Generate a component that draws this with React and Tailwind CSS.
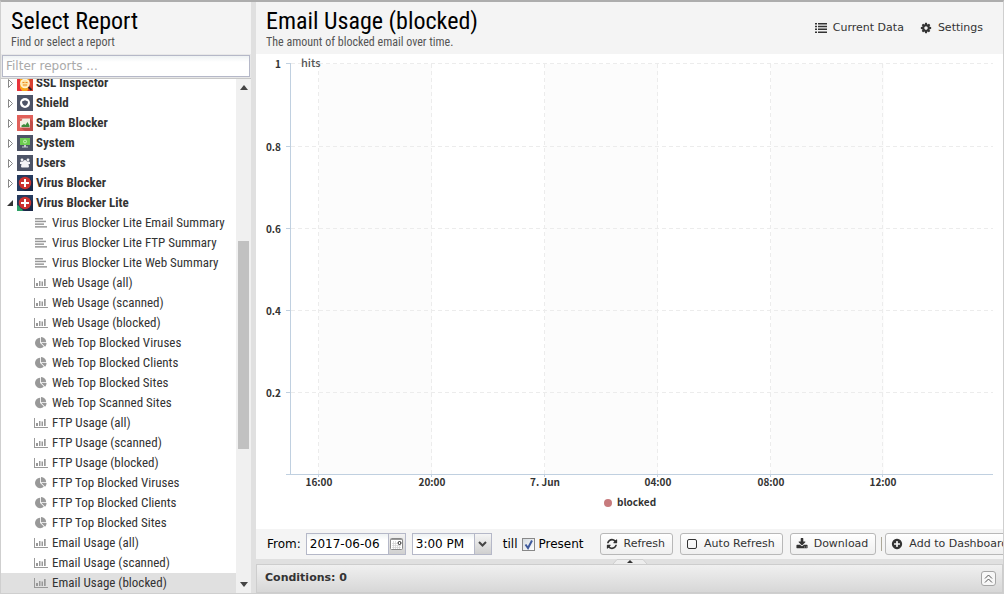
import React from "react";

const CONDENSED = "font-['Roboto_Condensed','Roboto',sans-serif]";

const PATHS = {
  cog: "M1152 896q0-106-75-181t-181-75-181 75-75 181 75 181 181 75 181-75 75-181zm512-109v222q0 12-8 23t-20 13l-185 28q-19 54-39 91 35 50 107 138 10 12 10 25t-9 23q-27 37-99 108t-94 71q-12 0-26-9l-138-108q-44 23-91 38-16 136-29 186-7 28-36 28h-222q-14 0-24.5-8.5t-11.5-21.5l-28-184q-49-16-90-37l-141 107q-10 9-25 9-14 0-25-11-126-114-165-168-7-10-7-23 0-12 8-23 15-21 51-66.5t54-70.5q-27-50-41-99l-183-27q-13-2-21-12.5t-8-23.5v-222q0-12 8-23t19-13l186-28q14-46 39-92-40-57-107-138-10-12-10-24 0-10 9-23 26-36 98.5-107.5t94.5-71.5q13 0 26 10l138 107q44-23 91-38 16-136 29-186 7-28 36-28h222q14 0 24.5 8.5t11.5 21.5l28 184q49 16 90 37l142-107q9-9 24-9 13 0 25 10 129 119 165 170 7 8 7 22 0 12-8 23-15 21-51 66.5t-54 70.5q26 50 41 98l183 28q13 2 21 12.5t8 23.5z",
  refresh: "M1639 1056q0 5-1 7-64 268-268 434.5t-478 166.5q-146 0-282.5-55t-243.5-157l-129 129q-19 19-45 19t-45-19-19-45v-448q0-26 19-45t45-19h448q26 0 45 19t19 45-19 45l-137 137q71 66 161 102t187 36q134 0 250-65t186-179q11-17 53-117 8-23 30-23h192q13 0 22.5 9.5t9.5 22.5zm25-800v448q0 26-19 45t-45 19h-448q-26 0-45-19t-19-45 19-45l138-138q-148-137-349-137-134 0-250 65t-186 179q-11 17-53 117-8 23-30 23h-199q-13 0-22.5-9.5t-9.5-22.5v-7q65-268 270-434.5t480-166.5q146 0 284 55.5t245 156.5l130-129q19-19 45-19t45 19 19 45z",
  download: "M1344 1344q0-26-19-45t-45-19-45 19-19 45 19 45 45 19 45-19 19-45zm256 0q0-26-19-45t-45-19-45 19-19 45 19 45 45 19 45-19 19-45zm128-224v320q0 40-28 68t-68 28h-1472q-40 0-68-28t-28-68v-320q0-40 28-68t68-28h465l135 136q58 56 136 56t136-56l136-136h464q40 0 68 28t28 68zm-325-569q17 41-14 70l-448 448q-18 19-45 19t-45-19l-448-448q-31-29-14-70 17-39 59-39h256v-448q0-26 19-45t45-19h256q26 0 45 19t19 45v448h256q42 0 59 39z",
  plus: "M1344 960v-128q0-26-19-45t-45-19h-256v-256q0-26-19-45t-45-19h-128q-26 0-45 19t-19 45v256h-256q-26 0-45 19t-19 45v128q0 26 19 45t45 19h256v256q0 26 19 45t45 19h128q26 0 45-19t19-45v-256h256q26 0 45-19t19-45zm320-64q0 209-103 385.5t-279.5 279.5-385.5 103-385.5-103-279.5-279.5-103-385.5 103-385.5 279.5-279.5 385.5-103 385.5 103 279.5 279.5 103 385.5z",
  pie: "M768 890l546 546q-106 108-247.5 168t-298.5 60q-209 0-385.5-103t-279.5-279.5-103-385.5 103-385.5 279.5-279.5 385.5-103v762zm187 6h773q0 157-60 298.5t-168 247.5zm709-128h-768v-768q209 0 385.5 103t279.5 279.5 103 385.5z",
};

function Glyph({ name, className }) {
  return (
    <svg viewBox="0 0 1792 1792" className={className} fill="currentColor" aria-hidden="true">
      <path d={PATHS[name]} />
    </svg>
  );
}

function ReportIcon({ type }) {
  if (type === "pie") return <Glyph name="pie" className="h-3 w-[14px] shrink-0 text-[#999]" />;
  return (
    <svg viewBox="0 0 14 12" className="h-3 w-[14px] shrink-0" fill="#999" aria-hidden="true">
      {type === "text" ? (
        <>
          <rect x="1" y="1" width="8" height="1.500" />
          <rect x="1" y="3.700" width="11" height="1.500" />
          <rect x="1" y="6.400" width="9" height="1.500" />
          <rect x="1" y="9.100" width="12" height="1.500" />
        </>
      ) : (
        <>
          <rect x="0" y="1" width="1" height="10" />
          <rect x="0" y="10" width="14" height="1" />
          <rect x="2" y="6" width="2" height="3" />
          <rect x="5" y="4" width="1.500" height="5" />
          <rect x="7.500" y="4.500" width="1.500" height="4.500" />
          <rect x="10" y="2" width="1.700" height="7" />
        </>
      )}
    </svg>
  );
}

function AppIcon({ type }) {
  const virus = type === "virus" || type === "lite";
  return (
    <svg viewBox="0 0 16 16" className="h-4 w-4 shrink-0" aria-hidden="true">
      {type === "ssl" && (
        <>
          <path fill="#e8343c" d="M0 0h16v16H0z" />
          <path fill="#f9a51b" d="M3 0h10v13l-3 3H5L3 13z" />
          <path fill="#d9402f" d="M13 0h3v16h-5z" />
          <circle cx="8" cy="8.500" r="4.200" fill="#fbe3a4" stroke="#fff4d6" strokeWidth="1.200" />
          <path stroke="#f08a1c" strokeWidth="1.200" fill="none" d="M5.500 7.500h2M8.500 7.500h2M6 10h4" />
          <path stroke="#3a2320" strokeWidth="1.800" d="M11.500 12l3 3" />
        </>
      )}
      {type === "shield" && (
        <>
          <path fill="#4d5467" d="M0 0h16v16H0z" />
          <circle cx="8" cy="8" r="5" fill="#fff" />
          <path fill="#4d5467" d="M5 6.400l3-1.200 3 1.200c0 2.100-1 3.500-3 4.700-2-1.200-3-2.600-3-4.700z" />
        </>
      )}
      {type === "spam" && (
        <>
          <path fill="#e0605a" d="M0 0h16v16H0z" />
          <path fill="#c04d48" d="M13 4l3 3v9H8l-4-3z" />
          <path fill="#f3efe4" d="M3 3.500h10v9H3z" />
          <path fill="#d9695f" d="M3 3.500h2.500l-1 2.500H3z" />
          <path fill="#3c8c3e" d="M4.500 12v-1.500L7 9l1.500 1 2-3 2 3.500V12z" />
        </>
      )}
      {type === "system" && (
        <>
          <path fill="#4d5467" d="M0 0h16v16H0z" />
          <path fill="#6ccb50" d="M3 3h10v7H3z" />
          <circle cx="8" cy="6.500" r="1.500" fill="none" stroke="#c9efbb" />
          <path fill="#c5c9d0" d="M7 10h2v1.500h2v1H5v-1h2z" />
        </>
      )}
      {type === "users" && (
        <>
          <path fill="#4d5467" d="M0 0h16v16H0z" />
          <g fill="#f4f4f6">
            <circle cx="5" cy="4.800" r="1.400" />
            <circle cx="11" cy="4.800" r="1.400" />
            <circle cx="8" cy="6.800" r="1.900" />
            <path d="M3 9V7.500q0-1 1.500-1h7q1.500 0 1.500 1V9h-1.500l.5 2.500q0 1-1 1H5q-1 0-1-1L4.500 9z" />
          </g>
        </>
      )}
      {virus && (
        <>
          <path fill="#263a5e" d="M0 0h16v16H0z" />
          <path fill="#1a2847" d="M13 4l3 3v9H8l-4-3z" />
          <circle cx="8" cy="8" r="6.200" fill="#cb3230" />
          <path fill="#fff" d="M7 4h2v3h3v2H9v3H7V9H4V7h3z" />
          {type === "lite" && <path fill="#2fa166" d="M0 10l2 1 1 2 2 1 1 2H0z" />}
        </>
      )}
    </svg>
  );
}

const GROUPS = [
  ["SSL Inspector", "ssl"],
  ["Shield", "shield"],
  ["Spam Blocker", "spam"],
  ["System", "system"],
  ["Users", "users"],
  ["Virus Blocker", "virus"],
  ["Virus Blocker Lite", "lite"],
];

const REPORTS = [
  ["Virus Blocker Lite Email Summary", "text"],
  ["Virus Blocker Lite FTP Summary", "text"],
  ["Virus Blocker Lite Web Summary", "text"],
  ["Web Usage (all)", "bar"],
  ["Web Usage (scanned)", "bar"],
  ["Web Usage (blocked)", "bar"],
  ["Web Top Blocked Viruses", "pie"],
  ["Web Top Blocked Clients", "pie"],
  ["Web Top Blocked Sites", "pie"],
  ["Web Top Scanned Sites", "pie"],
  ["FTP Usage (all)", "bar"],
  ["FTP Usage (scanned)", "bar"],
  ["FTP Usage (blocked)", "bar"],
  ["FTP Top Blocked Viruses", "pie"],
  ["FTP Top Blocked Clients", "pie"],
  ["FTP Top Blocked Sites", "pie"],
  ["Email Usage (all)", "bar"],
  ["Email Usage (scanned)", "bar"],
  ["Email Usage (blocked)", "bar"],
];

function Title({ title, subtitle }) {
  return (
    <div className={`min-w-0 whitespace-nowrap ${CONDENSED}`}>
      <h1 className="text-2xl leading-7 text-black">{title}</h1>
      <p className="text-xs leading-[14px] text-[#555]">{subtitle}</p>
    </div>
  );
}

function ReportTree() {
  return (
    <div className="flex min-h-0 flex-1 border-t border-[#c8c8c8] bg-white">
      <div className={`min-w-0 flex-1 overflow-hidden whitespace-nowrap text-[13px] leading-5 text-[#333] ${CONDENSED}`}>
        <ul className="-mt-1.5">
          {GROUPS.map(([name, icon]) => {
            const open = icon === "lite";
            return (
              <li key={name} className="flex h-5 items-center pl-[5px] font-bold">
                <svg viewBox="0 0 8 10" className="mr-[3px] h-[10px] w-2" aria-hidden="true">
                  {open ? <path fill="#333" d="M7 2v6H1z" /> : <path fill="#fff" stroke="#888" d="M2.500 1.500v8L6.500 5.500z" />}
                </svg>
                <AppIcon type={icon} />
                <span className="ml-[3px]">{name}</span>
              </li>
            );
          })}
          {REPORTS.map(([name, icon]) => (
            <li key={name} className={`flex h-5 items-center gap-1 pl-[33px] ${name === "Email Usage (blocked)" ? "bg-[#e0e0e0]" : ""}`}>
              <ReportIcon type={icon} />
              <a href="#report">{name}</a>
            </li>
          ))}
        </ul>
      </div>
      <div className="flex w-[15px] shrink-0 flex-col items-center bg-[#f0f0f0] py-1.5">
        <svg viewBox="0 0 8 5" className="h-[5px] w-2" aria-hidden="true"><path fill="#444" d="M4 0l4 5H0z" /></svg>
        <div className="grow-[151] basis-0" />
        <div className="mr-px w-[11px] grow-[207] basis-0 bg-[#c1c1c1]" />
        <div className="grow-[133] basis-0" />
        <svg viewBox="0 0 8 5" className="h-[5px] w-2" aria-hidden="true"><path fill="#444" d="M0 0h8L4 5z" /></svg>
      </div>
    </div>
  );
}

const Y_TICKS = [["1", 10], ["0.8", 93], ["0.6", 175], ["0.4", 257], ["0.2", 339]];
const X_TICKS = [["16:00", 63], ["20:00", 176], ["7. Jun", 289], ["04:00", 402], ["08:00", 515], ["12:00", 627]];

function Chart() {
  return (
    <svg viewBox="0 0 747 475" className="block h-full w-full font-['Noto_Sans_CJK_JP',sans-serif] text-[10px] font-bold" role="img" aria-label="Blocked email hits over time">
      {[63, 289, 515].map((x) => <rect key={x} x={x} y="10" width="113" height="410" fill="#fcfcfc" />)}
      <g stroke="#ececec" strokeDasharray="4 3" shapeRendering="crispEdges">
        {Y_TICKS.map(([t, y]) => <path key={t} d={`M35 ${y - 0.5}H737`} />)}
        {X_TICKS.map(([t, x]) => <path key={t} d={`M${x - 0.5} 10V420`} />)}
      </g>
      <g stroke="#c0d0e0" shapeRendering="crispEdges">
        <path d="M34.5 9V421M30 420.500H737" />
        {Y_TICKS.map(([t, y]) => <path key={t} d={`M30 ${y - 0.5}H34`} />)}
        {X_TICKS.map(([t, x]) => <path key={t} d={`M${x - 0.5} 420V423`} />)}
      </g>
      <g fill="#333">
        {Y_TICKS.map(([t, y]) => <text key={t} x="25" y={y + 4} textAnchor="end">{t}</text>)}
        {X_TICKS.map(([t, x]) => <text key={t} x={x} y="432" textAnchor="middle">{t}</text>)}
      </g>
      <text x="45" y="13" fill="#555" className="text-[11px] font-medium">hits</text>
      <circle cx="352" cy="449" r="4" fill="#c77b7d" />
      <text x="361" y="452" fill="#333">blocked</text>
    </svg>
  );
}

function ToolButton({ icon, children, checkbox }) {
  return (
    <button className="flex h-[22px] shrink-0 items-center gap-1.5 rounded-[3px] border border-[#b8b8b8] bg-linear-to-b from-white to-[#efefef] pl-[5px] pr-[7px] text-[11px] text-[#333]">
      {checkbox ? <span className="mx-px h-[10px] w-[10px] rounded-[2px] border border-[#333]" /> : <Glyph name={icon} className="h-3 w-3" />}
      <span>{children}</span>
    </button>
  );
}

function Toolbar() {
  return (
    <div className="flex h-[30px] shrink-0 items-center overflow-hidden whitespace-nowrap bg-[#f4f4f4] pl-[11px] text-xs text-black">
      <label htmlFor="from-date" className="mr-[5px]">From:</label>
      <div className="flex h-[22px] w-[100px] shrink-0 border border-[#b5b8c8] bg-white">
        <input id="from-date" defaultValue="2017-06-06" className="min-w-0 flex-1 bg-linear-to-b from-[#eef2f3] to-white to-30% px-[3px] outline-none" />
        <button aria-label="Pick a date" className="flex w-[17px] items-center justify-center border-l border-[#b5b8c8] bg-linear-to-b from-[#f2f2f2] to-[#d0d0d0]">
          <svg viewBox="0 0 13 13" className="h-[13px] w-[13px]" aria-hidden="true">
            <rect x=".5" y=".5" width="12" height="11" rx="1" fill="#fff" stroke="#888" />
            <path fill="#999" d="M1 1h11v1H1z" />
            <path stroke="#d0d0d0" strokeWidth=".7" d="M3.500 3v8M5.500 3v8M7.500 7v4M9.500 8v3M2 5.500h5M2 7.500h9M2 9.500h9" />
            <circle cx="9.500" cy="5" r="1.500" fill="#fff" stroke="#222" />
          </svg>
        </button>
      </div>
      <div className="relative ml-1.5 h-[22px] w-20 shrink-0 border border-[#b5b8c8]">
        <select aria-label="From time" defaultValue="3:00 PM" className="h-full w-full appearance-none bg-linear-to-b from-[#eef2f3] to-white to-30% pl-[3px] outline-none">
          <option>3:00 PM</option>
        </select>
        <span className="pointer-events-none absolute inset-y-0 right-0 flex w-[17px] items-center justify-center border-l border-[#b5b8c8] bg-linear-to-b from-[#f5f5f5] to-[#cfcfcf]">
          <svg viewBox="0 0 9 6" className="h-1.5 w-[9px]" aria-hidden="true"><path d="M1 1l3.500 3.500L8 1" fill="none" stroke="#444" strokeWidth="2" /></svg>
        </span>
      </div>
      <label htmlFor="present" className="ml-[11px]">till</label>
      <span className="relative mx-1 flex h-[13px] w-[13px] shrink-0">
        <input id="present" type="checkbox" defaultChecked aria-label="Present" className="peer h-[13px] w-[13px] appearance-none border border-[#888] bg-linear-to-br from-[#d5dbe0] to-white" />
        <svg viewBox="0 0 13 13" className="pointer-events-none absolute inset-0 hidden peer-checked:block" aria-hidden="true"><path d="M3.500 6.500l2.500 3.500 4-7.500" fill="none" stroke="#3f5a9c" strokeWidth="2" /></svg>
      </span>
      <label htmlFor="present">Present</label>
      <div className="ml-4 flex items-center gap-[7px]">
        <ToolButton icon="refresh">Refresh</ToolButton>
        <ToolButton checkbox>Auto Refresh</ToolButton>
        <ToolButton icon="download">Download</ToolButton>
      </div>
      <span className="ml-[5px] mr-[3px] h-[14px] w-px shrink-0 bg-[#aca899]" />
      <ToolButton icon="plus">Add to Dashboard</ToolButton>
    </div>
  );
}

export default function App() {
  return (
    <div className="flex h-screen overflow-hidden border border-t-2 border-[#cfcfcf] border-t-[#adadad] bg-[#e0e0e0] font-['DejaVu_Sans',sans-serif]">
      <aside className="flex w-[250px] shrink-0 flex-col">
        <header className="h-[52px] shrink-0 bg-[#f4f4f4] pl-[10px] pt-[5px]">
          <Title title="Select Report" subtitle="Find or select a report" />
        </header>
        <div className="shrink-0 bg-[#e8e8e8] p-px">
          <input aria-label="Filter reports" placeholder="Filter reports ..." className="block h-[22px] w-full border border-[#b5b8c8] bg-linear-to-b from-[#eef2f3] to-white to-30% px-[3px] text-xs outline-none placeholder:text-[#a9a9a9]" />
        </div>
        <ReportTree />
      </aside>
      <main className="ml-[5px] flex min-w-0 flex-1 flex-col">
        <header className="flex h-[52px] shrink-0 items-start justify-between bg-[#f4f4f4] pl-[10px] pr-5 pt-[5px]">
          <Title title="Email Usage (blocked)" subtitle="The amount of blocked email over time." />
          <div className="flex h-[42px] items-center gap-4 text-[11px] text-[#333]">
            <button className="flex items-center gap-1.5">
              <svg viewBox="0 0 12 10" className="h-[10px] w-3" fill="currentColor" aria-hidden="true">
                <path d="M0 0h2v1.500H0zM3 0h9v1.500H3zM0 2.800h2v1.500H0zM3 2.800h9v1.500H3zM0 5.600h2v1.500H0zM3 5.600h9v1.500H3zM0 8.400h2v1.500H0zM3 8.400h9v1.500H3z" />
              </svg>
              Current Data
            </button>
            <button className="flex items-center gap-1.5">
              <Glyph name="cog" className="h-3 w-3" />
              Settings
            </button>
          </div>
        </header>
        <section className="min-h-0 flex-1 bg-white"><Chart /></section>
        <Toolbar />
        <div className="flex h-[5px] shrink-0 justify-center">
          <svg viewBox="0 0 36 5" className="h-[5px] w-9" aria-hidden="true">
            <path d="M1 5l4-4.500h26l4 4.500" fill="#ededed" stroke="#cfcfcf" />
            <path d="M18 1l3 3h-6z" fill="#333" />
          </svg>
        </div>
        <footer className="flex h-[29px] shrink-0 items-center justify-between border border-[#cdcdcd] bg-linear-to-b from-[#f0f0f0] to-[#d7d7d7] pl-2 pr-1.5">
          <h2 className="text-[11px] font-bold text-[#333]">Conditions: 0</h2>
          <button aria-label="Expand conditions" className="flex h-[15px] w-[15px] items-center justify-center rounded-[3px] border border-[#a5a5a5] bg-[#f7f7f7]">
            <svg viewBox="0 0 9 9" className="h-[9px] w-[9px]" fill="none" stroke="#555" aria-hidden="true"><path d="M1 4.500L4.500 1 8 4.500M1 8.500L4.500 5 8 8.500" /></svg>
          </button>
        </footer>
      </main>
    </div>
  );
}
